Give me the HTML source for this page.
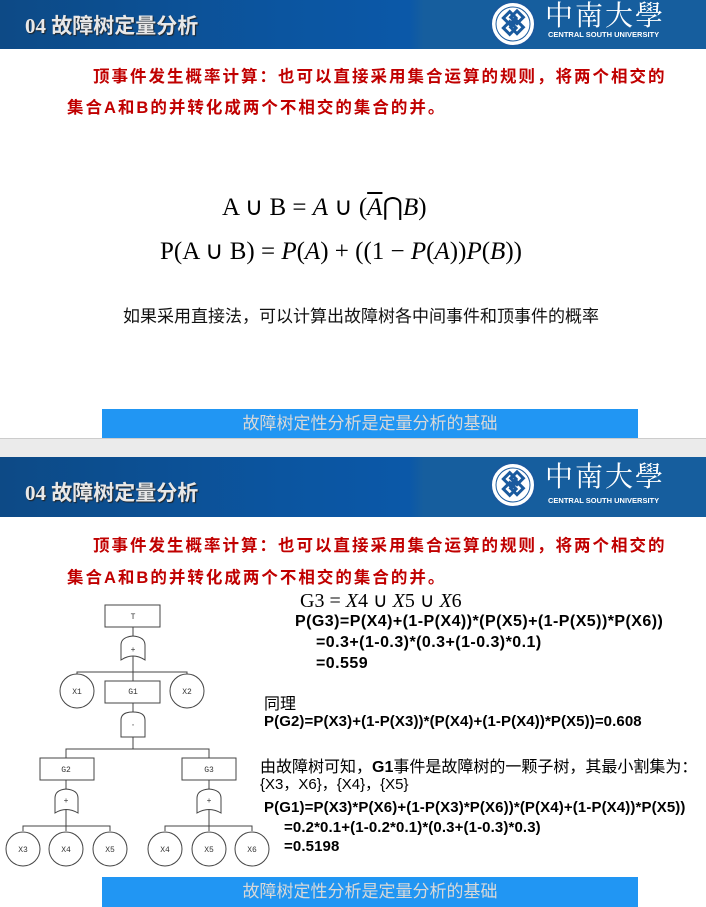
<!DOCTYPE html>
<html><head><meta charset="utf-8"><style>
*{margin:0;padding:0;box-sizing:border-box}
body{width:706px;height:904px;position:relative;background:#fff;overflow:hidden;font-family:"Liberation Sans","Noto Sans CJK SC",sans-serif}
.a{position:absolute;white-space:nowrap}
.hdr{position:absolute;left:0;width:706px;background:linear-gradient(90deg,#0d4a86 0%,#0b55a0 40%,#0b58a8 58%,#165e9e 60%,#165e9e 100%)}
.ttl{position:absolute;left:25px;color:#e8e8e8;font-weight:bold;font-size:21px;font-family:"Liberation Serif","Noto Sans CJK SC",serif;text-shadow:1px 1px 1px #222}
.red{color:#c00000;font-weight:bold;font-size:16.5px;letter-spacing:2px;font-family:"Liberation Sans","Noto Sans CJK SC",sans-serif}
.bar{position:absolute;left:102px;width:536px;height:30px;background:#2196f3;color:#d8d8d8;font-size:17px;text-align:center;line-height:30px}
.m{font-family:"Liberation Serif",serif;font-size:25px;color:#000}
.b{font-weight:bold;font-size:16px;color:#000}
.logo{position:absolute;left:490px;width:46px;height:46px;border-radius:50%;background:#fff;border:2px solid #1a5a9e}
.zn{position:absolute;left:545px;color:#fff;font-size:28px;font-family:"Noto Serif CJK SC",serif;letter-spacing:2px}
.en{position:absolute;left:548px;color:#fff;font-size:7.5px;font-weight:bold}
</style></head><body>

<div class="hdr" style="top:0;height:49px"></div>
<div class="ttl" style="top:10px">04 故障树定量分析</div>
<div class="logo" style="top:1px"><svg width="42" height="42" viewBox="0 0 42 42"><circle cx="21" cy="21" r="17" fill="none" stroke="#1a5a9e" stroke-width="1"/><g fill="none" stroke="#1a5a9e" stroke-width="3"><rect x="13" y="10" width="9" height="9" transform="rotate(45 17 15)"/><rect x="20" y="10" width="9" height="9" transform="rotate(45 25 15)"/><rect x="13" y="20" width="9" height="9" transform="rotate(45 17 25)"/><rect x="20" y="20" width="9" height="9" transform="rotate(45 25 25)"/></g></svg></div>
<div class="zn" style="top:-6px">中南大學</div>
<div class="en" style="top:30px">CENTRAL SOUTH UNIVERSITY</div>

<div class="a red" style="left:93px;top:63px">顶事件发生概率计算：也可以直接采用集合运算的规则，将两个相交的</div>
<div class="a red" style="left:67px;top:94px">集合A和B的并转化成两个不相交的集合的并。</div>

<div class="a m" style="left:222px;top:192px">A ∪ B = <i>A</i> ∪ (<i style="text-decoration:overline">A</i>⋂<i>B</i>)</div>
<div class="a m" style="left:160px;top:236px">P(A ∪ B) = <i>P</i>(<i>A</i>) + ((1 − <i>P</i>(<i>A</i>))<i>P</i>(<i>B</i>))</div>
<div class="a" style="left:123px;top:302px;font-size:17px;color:#111">如果采用直接法，可以计算出故障树各中间事件和顶事件的概率</div>
<div class="bar" style="top:409px">故障树定性分析是定量分析的基础</div>

<div class="a" style="left:0;top:438px;width:706px;height:19px;background:#ebebeb;border-top:1px solid #ccc"></div>

<div class="hdr" style="top:457px;height:60px"></div>
<div class="ttl" style="top:477px">04 故障树定量分析</div>
<div class="logo" style="top:462px"><svg width="42" height="42" viewBox="0 0 42 42"><circle cx="21" cy="21" r="17" fill="none" stroke="#1a5a9e" stroke-width="1"/><g fill="none" stroke="#1a5a9e" stroke-width="3"><rect x="13" y="10" width="9" height="9" transform="rotate(45 17 15)"/><rect x="20" y="10" width="9" height="9" transform="rotate(45 25 15)"/><rect x="13" y="20" width="9" height="9" transform="rotate(45 17 25)"/><rect x="20" y="20" width="9" height="9" transform="rotate(45 25 25)"/></g></svg></div>
<div class="zn" style="top:455px">中南大學</div>
<div class="en" style="top:496px">CENTRAL SOUTH UNIVERSITY</div>

<div class="a red" style="left:93px;top:532px">顶事件发生概率计算：也可以直接采用集合运算的规则，将两个相交的</div>
<div class="a red" style="left:67px;top:564px">集合A和B的并转化成两个不相交的集合的并。</div>

<svg class="a" style="left:0;top:590px" width="280" height="290" viewBox="0 590 280 290">
<g fill="#fff" stroke="#444" stroke-width="1">
<rect x="105" y="605" width="55" height="22"/>
<line x1="133" y1="627" x2="133" y2="637"/>
<path d="M121 660 L121 645 Q121 637 133 636 Q145 637 145 645 L145 660 Q133 652 121 660Z"/>
<line x1="133" y1="656" x2="133" y2="681"/>
<polyline fill="none" points="77,674 77,672 187,672 187,674"/>
<circle cx="77" cy="691" r="17"/><circle cx="187" cy="691" r="17"/>
<rect x="105" y="681" width="55" height="22"/>
<line x1="133" y1="703" x2="133" y2="712"/>
<path d="M121 737 L121 720 Q121 712 133 712 Q145 712 145 720 L145 737Z"/>
<line x1="133" y1="737" x2="133" y2="749"/>
<polyline fill="none" points="66,758 66,749 209,749 209,758"/>
<rect x="40" y="758" width="54" height="22"/><rect x="182" y="758" width="54" height="22"/>
<line x1="66" y1="780" x2="66" y2="790"/><line x1="209" y1="780" x2="209" y2="790"/>
<path d="M55 813 L55 798 Q55 790 66 789 Q78 790 78 798 L78 813 Q66 806 55 813Z"/>
<path d="M197 813 L197 798 Q197 790 209 789 Q221 790 221 798 L221 813 Q209 806 197 813Z"/>
<line x1="66" y1="809" x2="66" y2="831"/><line x1="209" y1="809" x2="209" y2="831"/>
<polyline fill="none" points="23,831 23,826 110,826 110,831"/>
<polyline fill="none" points="165,831 165,826 252,826 252,831"/>
<circle cx="23" cy="849" r="17"/><circle cx="66" cy="849" r="17"/><circle cx="110" cy="849" r="17"/>
<circle cx="165" cy="849" r="17"/><circle cx="209" cy="849" r="17"/><circle cx="252" cy="849" r="17"/>
</g>
<g font-family="Liberation Mono,monospace" font-size="8" fill="#333" text-anchor="middle">
<text x="133" y="619">T</text><text x="133" y="652">+</text>
<text x="77" y="694">X1</text><text x="133" y="694">G1</text><text x="187" y="694">X2</text>
<text x="133" y="727">·</text>
<text x="66" y="772">G2</text><text x="209" y="772">G3</text>
<text x="66" y="803">+</text><text x="209" y="803">+</text>
<text x="23" y="852">X3</text><text x="66" y="852">X4</text><text x="110" y="852">X5</text>
<text x="165" y="852">X4</text><text x="209" y="852">X5</text><text x="252" y="852">X6</text>
</g>
</svg>

<div class="a" style="left:300px;top:588px;font-family:'Liberation Serif',serif;font-size:20px">G3 = <i>X</i>4 ∪ <i>X</i>5 ∪ <i>X</i>6</div>
<div class="a b" style="left:295px;top:613px;letter-spacing:0.45px">P(G3)=P(X4)+(1-P(X4))*(P(X5)+(1-P(X5))*P(X6))</div>
<div class="a b" style="left:316px;top:634px;letter-spacing:0.45px">=0.3+(1-0.3)*(0.3+(1-0.3)*0.1)</div>
<div class="a b" style="left:316px;top:655px;letter-spacing:0.45px">=0.559</div>
<div class="a" style="left:264px;top:690px;font-size:16px">同理</div>
<div class="a b" style="left:264px;top:713px;font-size:15px;letter-spacing:0.1px">P(G2)=P(X3)+(1-P(X3))*(P(X4)+(1-P(X4))*P(X5))=0.608</div>
<div class="a" style="left:260px;top:753px;font-size:16px">由故障树可知，<b>G1</b>事件是故障树的一颗子树，其最小割集为：</div>
<div class="a" style="left:260px;top:773px;font-size:15px">{X3，X6}，{X4}，{X5}</div>
<div class="a b" style="left:264px;top:799px;font-size:15px;letter-spacing:0.12px">P(G1)=P(X3)*P(X6)+(1-P(X3)*P(X6))*(P(X4)+(1-P(X4))*P(X5))</div>
<div class="a b" style="left:284px;top:819px;font-size:15px;letter-spacing:0.12px">=0.2*0.1+(1-0.2*0.1)*(0.3+(1-0.3)*0.3)</div>
<div class="a b" style="left:284px;top:838px;font-size:15px;letter-spacing:0.12px">=0.5198</div>
<div class="bar" style="top:877px">故障树定性分析是定量分析的基础</div>
</body></html>
